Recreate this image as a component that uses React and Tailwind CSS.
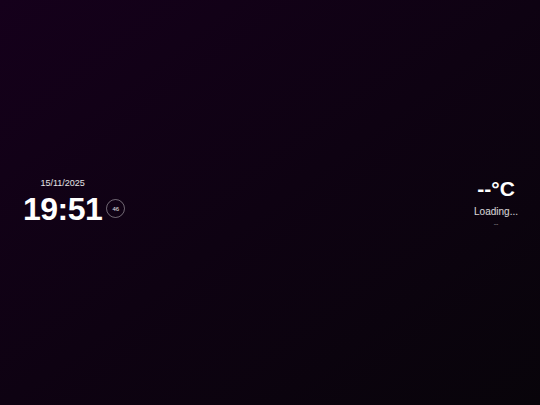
import React from 'react'

const Clock = () => (
  <div className="flex flex-col items-start">
    <div className="flex items-center gap-[4px]">
      <div className="flex flex-col items-center">
        <span className="text-[9px] leading-[11px] text-white/90 mb-[4px]">15/11/2025</span>
        <span className="text-[32px] leading-[32px] font-bold text-white tracking-[-0.5px]">19:51</span>
      </div>
      <div className="mt-[15px] w-[19px] h-[19px] rounded-full border border-white/40 flex items-center justify-center">
        <span className="text-[6px] leading-none text-white/90">46</span>
      </div>
    </div>
  </div>
)

const Weather = () => (
  <div className="flex flex-col items-center">
    <span className="text-[21px] leading-[22px] font-bold text-white">--°C</span>
    <span className="mt-[6px] text-[10px] leading-[11px] text-white/85">Loading...</span>
    <span className="mt-[3px] text-[7px] leading-[8px] text-white/50">--</span>
  </div>
)

export default function App() {
  return (
    <div
      className="w-[540px] h-[405px] overflow-hidden flex items-center justify-between pl-[23px] pr-[22px] bg-gradient-to-br from-[#15001b] via-[#0e0212] to-[#08040a]"
      style={{ fontFamily: '"Liberation Sans", Arial, sans-serif' }}
    >
      <div className="-mt-[3px]">
        <Clock />
      </div>
      <div className="mt-[1px]">
        <Weather />
      </div>
    </div>
  )
}
